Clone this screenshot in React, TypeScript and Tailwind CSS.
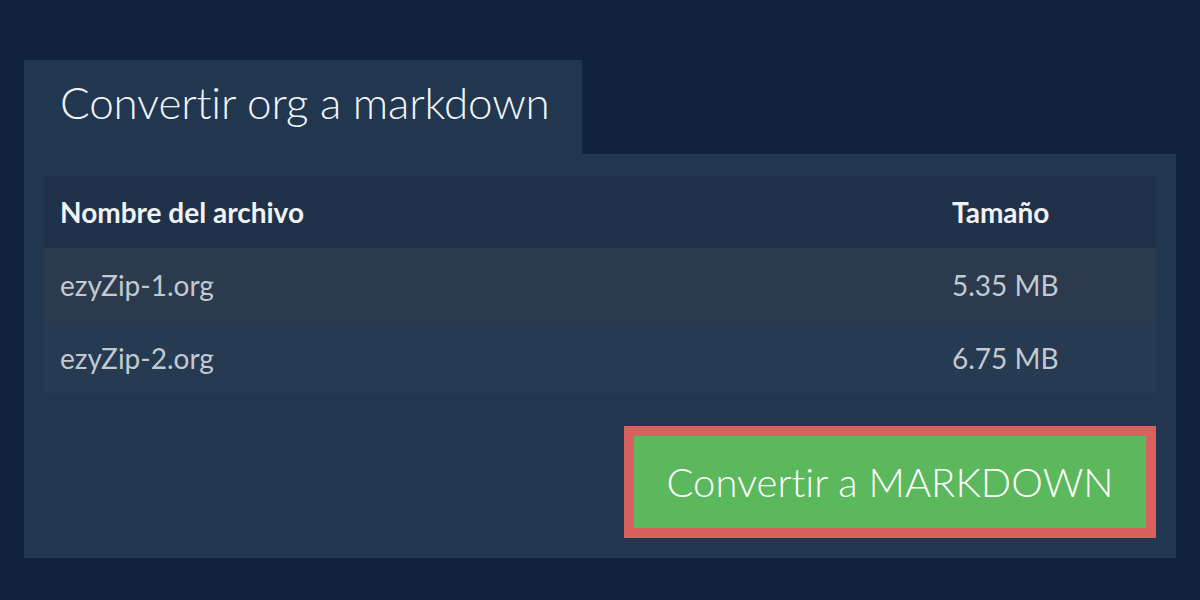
export default function App() {
  const files = [
    { name: "ezyZip-1.org", size: "5.35 MB" },
    { name: "ezyZip-2.org", size: "6.75 MB" },
  ];

  return (
    <div
      className="w-[1200px] h-[600px] bg-[#10233a] px-6 pt-[60px] overflow-hidden [font-variant-ligatures:none]"
      style={{ fontFamily: "Lato, 'Open Sans', sans-serif" }}
    >
      {/* tab */}
      <div className="flex">
        <div className="h-[94px] w-[558px] bg-[#21364f] pl-9 flex items-center">
          <h1 className="text-[44px] tracking-[-0.2px] font-light text-[#f2f4f6] leading-none pb-[10px]">
            Convertir org a markdown
          </h1>
        </div>
      </div>

      {/* panel */}
      <div className="bg-[#21364f] px-5 pt-[22px] pb-5">
        <table className="w-full border-collapse">
          <thead>
            <tr className="bg-[#1f3249] h-[72px]">
              <th className="text-left pl-4 text-[28px] font-bold text-[#f0f2f4]">
                Nombre del archivo
              </th>
              <th className="text-left pl-4 w-[220px] text-[28px] font-bold text-[#f0f2f4]">
                Tamaño
              </th>
            </tr>
          </thead>
          <tbody>
            {files.map((f, i) => (
              <tr
                key={f.name}
                className={i === 0 ? "bg-[#2b3b4d] h-[74px]" : "bg-[#263a52] h-[71px]"}
              >
                <td className="pl-4 text-[28px] text-[#c3c9d0]">{f.name}</td>
                <td className="pl-4 text-[28px] text-[#c3c9d0]">{f.size}</td>
              </tr>
            ))}
          </tbody>
        </table>

        <div className="flex justify-end mt-[33px]">
          <button className="w-[532px] h-[112px] border-[10px] border-[#d9605c] bg-[#5cb85c] text-white text-[40px] font-light flex items-center justify-center">
            Convertir a MARKDOWN
          </button>
        </div>
      </div>
    </div>
  );
}
